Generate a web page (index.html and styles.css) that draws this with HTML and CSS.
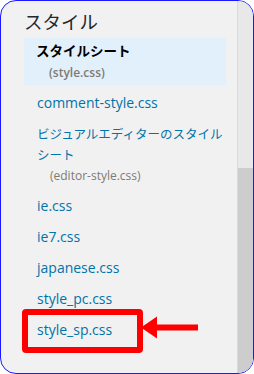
FILE: index.html
```html
<!DOCTYPE html>
<html lang="ja">
<head>
<meta charset="utf-8">
<link rel="stylesheet" href="styles.css">
</head>
<body>
<div class="frame">
  <div class="content">
    <h2 class="title">スタイル</h2>
    <ul class="files">
      <li class="current">
        <span class="cur-name">スタイルシート</span>
        <span class="sub">(style.css)</span>
      </li>
      <li class="item"><a href="#">comment-style.css</a></li>
      <li class="item multi">
        <a href="#">ビジュアルエディターのスタイルシート</a>
        <span class="sub">(editor-style.css)</span>
      </li>
      <li class="item"><a href="#">ie.css</a></li>
      <li class="item"><a href="#">ie7.css</a></li>
      <li class="item"><a href="#">japanese.css</a></li>
      <li class="item"><a href="#">style_pc.css</a></li>
      <li class="item marked">
        <a href="#">style_sp.css</a>
        <span class="redbox"></span>
        <svg class="arrow" width="58" height="23" viewBox="0 0 58 23">
          <polygon points="0,11.5 16,0.5 16,22.5" fill="#ff0000"/>
          <rect x="15" y="8.5" width="42" height="6" fill="#ff0000"/>
        </svg>
      </li>
    </ul>
  </div>
  <div class="scrollbar"><div class="thumb"></div></div>
</div>
</body>
</html>
```
FILE: styles.css
```css
html, body {
  margin: 0;
  padding: 0;
  background: #ffffff;
}
.frame {
  width: 254px;
  height: 374px;
  box-sizing: border-box;
  border: 1px solid #1a1aff;
  border-radius: 16px;
  background: #f1f1f1;
  overflow: hidden;
  display: flex;
  font-family: "Open Sans", "Noto Sans CJK JP", sans-serif;
}
.content {
  flex: 1;
  padding-left: 23px;
  padding-right: 11px;
}
.title {
  margin: 0;
  padding-top: 7px;
  height: 37px;
  box-sizing: border-box;
  font-family: "Noto Sans CJK JP", sans-serif;
  font-weight: 400;
  font-size: 18.5px;
  line-height: 26px;
  color: #23282d;
}
.files {
  list-style: none;
  margin: 0;
  padding: 0;
}
.current {
  background: #e2f0fc;
  height: 47px;
  padding-left: 12px;
  margin-bottom: 2px;
  display: flex;
  flex-direction: column;
}
.cur-name {
  font-family: "Noto Sans CJK JP", sans-serif;
  font-weight: 700;
  font-size: 13.5px;
  line-height: 24px;
  color: #000;
}
.sub {
  display: block;
  padding-left: 13px;
  font-size: 12px;
  font-weight: 600;
  line-height: 21px;
  color: #7f7b72;
}
.item {
  padding-left: 13px;
  line-height: 31px;
  font-size: 14px;
  position: relative;
}
.item a {
  color: #0073aa;
  text-decoration: none;
}
.item:nth-child(2) {
  line-height: 32px;
}
.item.multi {
  line-height: 21px;
  padding-top: 4px;
  padding-bottom: 4px;
}
.item.multi a {
  font-family: "Noto Sans CJK JP", sans-serif;
  font-size: 12.5px;
  display: block;
}
.item.multi .sub {
  font-weight: 400;
}
.redbox {
  position: absolute;
  left: -2px;
  top: -5px;
  width: 121px;
  height: 44px;
  box-sizing: border-box;
  border: 6px solid #ff0000;
  border-radius: 4px;
}
.arrow {
  position: absolute;
  left: 117px;
  top: 2px;
}
.scrollbar {
  width: 15px;
  background: #e8e8e8;
  border-left: 1px solid #dadada;
  display: flex;
  flex-direction: column;
}
.thumb {
  margin-top: 167px;
  flex: 1;
  background: #cdcdcd;
}
```
